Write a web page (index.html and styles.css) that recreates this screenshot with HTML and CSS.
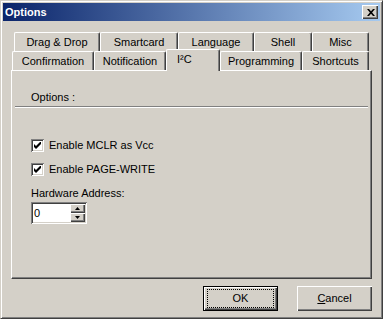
FILE: index.html
```html
<!DOCTYPE html>
<html lang="en">
<head>
<meta charset="utf-8">
<title>Options</title>
<link rel="stylesheet" href="styles.css">
</head>
<body>

<div class="window">

    <div class="titlebar">
        <span class="title">Options</span>
        <button class="close-btn" title="Close">
            <svg width="8" height="7" viewBox="0 0 8 7">
                <path d="M0 0 H2 L4 2.2 L6 0 H8 L5.1 3.5 L8 7 H6 L4 4.8 L2 7 H0 L2.9 3.5 Z" fill="#000"/>
            </svg>
        </button>
    </div>

    <div class="dialog-body">

        <div class="tabs">
            <div class="tab-row tab-row-back">
                <div class="tab">Drag &amp; Drop</div>
                <div class="tab">Smartcard</div>
                <div class="tab">Language</div>
                <div class="tab">Shell</div>
                <div class="tab">Misc</div>
            </div>
            <div class="tab-row tab-row-front">
                <div class="tab">Confirmation</div>
                <div class="tab">Notification</div>
                <div class="tab tab-active">I²C</div>
                <div class="tab">Programming</div>
                <div class="tab">Shortcuts</div>
            </div>
        </div>

        <div class="panel">
            <div class="group-title">Options :</div>
            <div class="separator"></div>

            <div class="options">
                <label class="check-row">
                    <span class="checkbox">
                        <svg width="7" height="7" viewBox="0 0 7 7"><polygon points="0,2 2,4 6,0 7,0 7,2 2,7 0,5" fill="#000"/></svg>
                    </span>
                    Enable MCLR as Vcc
                </label>
                <label class="check-row">
                    <span class="checkbox">
                        <svg width="7" height="7" viewBox="0 0 7 7"><polygon points="0,2 2,4 6,0 7,0 7,2 2,7 0,5" fill="#000"/></svg>
                    </span>
                    Enable PAGE-WRITE
                </label>

                <div class="field-label">Hardware Address:</div>
                <div class="spin">
                    <span class="spin-value">0</span>
                    <span class="spin-buttons">
                        <span class="spin-btn"><svg width="5" height="3" viewBox="0 0 5 3"><polygon points="2.5,0 5,3 0,3" fill="#000"/></svg></span>
                        <span class="spin-btn"><svg width="5" height="3" viewBox="0 0 5 3"><polygon points="0,0 5,0 2.5,3" fill="#000"/></svg></span>
                    </span>
                </div>
            </div>
        </div>

        <div class="button-row">
            <button class="btn btn-default"><span class="focus-rect">OK</span></button>
            <button class="btn"><span class="btn-label"><u>C</u>ancel</span></button>
        </div>

    </div>

</div>

</body>
</html>
```

FILE: styles.css
```css
html, body {
    margin: 0;
    padding: 0;
}
body {
    width: 383px;
    height: 319px;
    font: normal 11px/13px "Liberation Sans", Arial, sans-serif;
    color: #000;
    background: #d4d0c8;
}

.window {
    width: 383px;
    height: 319px;
    box-sizing: border-box;
    border: 1px solid;
    border-color: #d4d0c8 #404040 #404040 #d4d0c8;
    box-shadow: inset 1px 1px #fff, inset -1px -1px #808080;
    padding: 2px;
    background: #d4d0c8;
}

/* caption */
.titlebar {
    height: 18px;
    display: flex;
    align-items: center;
    justify-content: space-between;
    padding-left: 2px;
    background: linear-gradient(to right, #0a246a, #a6caf0);
}
.title {
    color: #fff;
    font-weight: bold;
    font-size: 11px;
}
.close-btn {
    width: 16px;
    height: 14px;
    margin: 0 2px 0 0;
    padding: 0 0 0 1px;
    border: 0;
    display: flex;
    align-items: center;
    justify-content: center;
    background: #d4d0c8;
    box-shadow: inset 1px 1px #fff, inset -1px -1px #404040, inset -2px -2px #808080;
}

.dialog-body {
    padding: 11px 8px 0 8px;
}

/* tabs */
.tab-row {
    display: grid;
    height: 19px;
}
.tab-row-back {
    margin-left: 3px;
    grid-template-columns: 86px 78px 76px 58px 57px;
}
.tab-row-front {
    margin-left: 1px;
    grid-template-columns: 82px 72px 54px 82px 67px;
}
.tab {
    box-sizing: border-box;
    height: 19px;
    display: flex;
    align-items: center;
    justify-content: center;
    padding-top: 1px;
    border-top: 1px solid #fff;
    border-left: 1px solid #fff;
    border-right: 1px solid #404040;
    border-radius: 2px 2px 0 0;
    box-shadow: inset -1px 0 #808080;
    background: #d4d0c8;
    white-space: nowrap;
}
.tab-active {
    position: relative;
    z-index: 1;
    height: 22px;
    margin-top: -2px;
    align-items: flex-start;
    justify-content: flex-start;
    padding: 3px 0 0 10px;
}

/* page */
.panel {
    box-sizing: border-box;
    height: 209px;
    padding: 0 3px;
    border-top: 1px solid #fff;
    border-left: 1px solid #fff;
    border-right: 1px solid #404040;
    border-bottom: 1px solid #404040;
    box-shadow: inset -1px -1px #808080;
}
.group-title {
    padding: 20px 0 0 16px;
}
.separator {
    margin-top: 2px;
    height: 0;
    border-top: 1px solid #808080;
    border-bottom: 1px solid #fff;
}

.options {
    padding: 31px 0 0 16px;
    display: flex;
    flex-direction: column;
    align-items: flex-start;
}
.check-row {
    display: flex;
    align-items: center;
    gap: 5px;
    height: 13px;
    margin-bottom: 11px;
}
.checkbox {
    width: 13px;
    height: 13px;
    box-sizing: border-box;
    display: flex;
    align-items: center;
    justify-content: center;
    background: #fff;
    box-shadow: inset 1px 1px #808080, inset -1px -1px #fff, inset 2px 2px #404040, inset -2px -2px #d4d0c8;
}

.spin {
    margin-top: 2px;
    width: 56px;
    height: 22px;
    box-sizing: border-box;
    padding: 2px;
    display: flex;
    background: #fff;
    box-shadow: inset 1px 1px #808080, inset -1px -1px #fff, inset 2px 2px #404040, inset -2px -2px #d4d0c8;
}
.spin-value {
    flex: 1;
    padding-left: 1px;
    line-height: 18px;
}
.spin-buttons {
    width: 15px;
    display: flex;
    flex-direction: column;
}
.spin-btn {
    flex: 1;
    display: flex;
    align-items: center;
    justify-content: center;
    background: #d4d0c8;
    box-shadow: inset 1px 1px #fff, inset -1px -1px #404040, inset -2px -2px #808080;
}

/* buttons */
.button-row {
    display: flex;
    justify-content: flex-end;
    gap: 19px;
    margin-top: 7px;
}
.btn {
    width: 75px;
    height: 25px;
    box-sizing: border-box;
    margin: 0;
    padding: 0;
    border: 0;
    display: flex;
    align-items: stretch;
    font: inherit;
    color: #000;
    background: #d4d0c8;
    box-shadow: inset 1px 1px #fff, inset -1px -1px #404040, inset -2px -2px #808080;
}
.btn-default {
    border: 1px solid #000;
}
.btn-label, .focus-rect {
    flex: 1;
    display: flex;
    align-items: center;
    justify-content: center;
}
.focus-rect {
    margin: 2px 3px;
    border: 1px dotted #000;
}
```
